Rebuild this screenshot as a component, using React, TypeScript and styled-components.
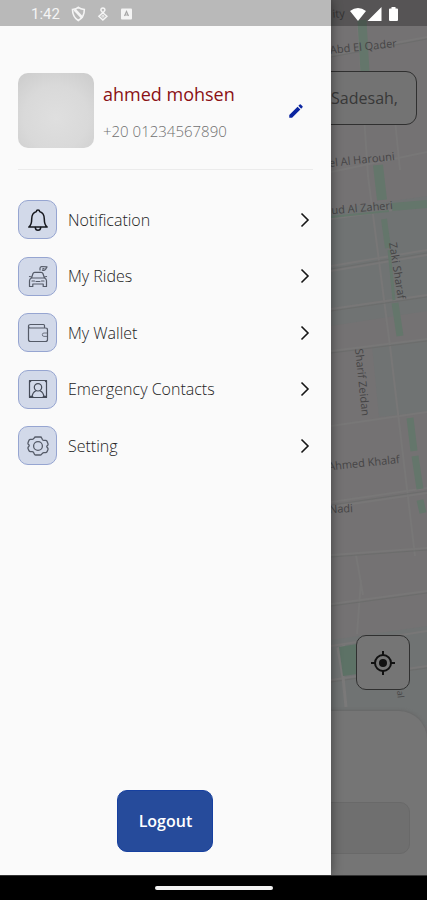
import React from "react";
import styled, { createGlobalStyle } from "styled-components";

const GlobalStyle = createGlobalStyle`
  *, *::before, *::after { box-sizing: border-box; }
  body {
    margin: 0;
    background: #000;
    font-family: "Open Sans", "Noto Sans", sans-serif;
  }
  button, input { font: inherit; }
`;

const Screen = styled.div`
  display: flex;
  flex-direction: column;
  min-height: 100vh;
`;

const Stage = styled.main`
  position: relative;
  flex: 1;
  display: grid;
  overflow: hidden;
`;

const Backdrop = styled.section`
  grid-area: 1 / 1;
  position: relative;
  display: flex;
  flex-direction: column;
  background: #747273;
`;

const MapDrawing = styled.svg`
  position: absolute;
  top: 0;
  right: 0;
  width: 100%;
  height: 100%;
`;

const SearchInput = styled.input`
  position: relative;
  margin: 71px 10px 0;
  height: 54px;
  padding: 0 18px;
  border: 1px solid #303030;
  border-radius: 11px;
  background: #737373;
  color: #383838;
  font-size: 16px;
  text-align: right;
`;

const LocateButton = styled.button`
  position: relative;
  display: grid;
  place-items: center;
  width: 54px;
  height: 55px;
  margin: auto 17px 21px auto;
  padding: 0;
  border: 1px solid #303030;
  border-radius: 10px;
  background: #757575;
`;

const Sheet = styled.div`
  position: relative;
  height: 164px;
  padding: 91px 17px 0;
  border-radius: 0 28px 0 0;
  background: #757575;
  box-shadow: 0 -1px 3px #666;
`;

const SheetInput = styled.input`
  width: 100%;
  height: 52px;
  border: 1px solid #696969;
  border-radius: 10px;
  background: #6f6f6f;
`;

const Drawer = styled.aside`
  grid-area: 1 / 1;
  position: relative;
  display: flex;
  flex-direction: column;
  width: 77.5%;
  padding: 73px 18px 23px;
  background: #fafafa;
  box-shadow: 1px 0 10px rgba(0, 0, 0, 0.4);
`;

const Profile = styled.header`
  display: flex;
  align-items: center;
  gap: 9px;
  padding-bottom: 21px;
  border-bottom: 1px solid #ebebeb;
`;

const Avatar = styled.div`
  flex: none;
  width: 76px;
  height: 75px;
  border-radius: 10px;
  background: radial-gradient(circle at 50% 60%, #dfdfdf, #d9d9d9 55%, #cbcbcb);
`;

const Identity = styled.div`
  flex: 1;
  display: flex;
  flex-direction: column;
  gap: 13px;
  padding-top: 3px;
  white-space: nowrap;
`;

const Name = styled.h1`
  margin: 0;
  color: #8a1014;
  font-size: 18px;
  font-weight: 400;
  line-height: 24px;
`;

const Phone = styled.span`
  color: #707070;
  font-size: 15px;
  font-weight: 300;
  line-height: 24px;
`;

const EditButton = styled.button`
  display: grid;
  place-items: center;
  width: 18px;
  height: 18px;
  margin-right: 8px;
  padding: 0;
  border: 0;
  background: none;
`;

const Menu = styled.nav`
  display: flex;
  flex-direction: column;
  justify-content: space-between;
  height: 265px;
  margin-top: 30px;
`;

const MenuLink = styled.a`
  display: flex;
  align-items: center;
  height: 39px;
  padding-right: 3px;
  color: #222;
  font-size: 16px;
  font-weight: 300;
  line-height: 24px;
  text-decoration: none;
`;

const Tile = styled.span`
  display: grid;
  place-items: center;
  width: 39px;
  height: 39px;
  margin-right: 11px;
  border: 1px solid #96a5d1;
  border-radius: 10px;
  background: #d2d9e9;
`;

const Label = styled.span`
  flex: 1;
`;

const LogoutButton = styled.button`
  align-self: center;
  width: 96px;
  height: 62px;
  margin-top: auto;
  padding: 0;
  border: 1px solid #1640a0;
  border-radius: 10px;
  background: #264b9b;
  color: #fff;
  font-size: 16px;
  font-weight: 600;
`;

const StatusBar = styled.div`
  position: absolute;
  top: 0;
  left: 0;
  right: 0;
  display: flex;
  align-items: center;
  gap: 11px;
  height: 26px;
  padding: 2px 28px 0 31px;
  background: rgba(0, 0, 0, 0.26);
  color: #f4f4f4;
`;

const Clock = styled.span`
  font-family: Roboto, sans-serif;
  font-size: 15px;
  line-height: 20px;
`;

const Signals = styled.span`
  display: flex;
  margin-left: auto;
`;

const NavBar = styled.footer`
  display: grid;
  place-items: center;
  height: 25px;
  background: #000;
  border-top: 1px solid #333;
`;

const HomePill = styled.div`
  width: 118px;
  height: 4px;
  border-radius: 2px;
  background: #f2f2f2;
`;

const Icon = ({ size = 24, width = 1, color = "#555b68", children }: { size?: number; width?: number; color?: string; children: React.ReactNode }) => (
  <svg width={size} height={size} viewBox="0 0 24 24" fill="none" stroke={color} strokeWidth={width} strokeLinecap="round" strokeLinejoin="round" aria-hidden="true">
    {children}
  </svg>
);

const BellIcon = () => (
  <Icon width={1.5} color="#16181e">
    <path d="M2.800 19h18.400c-2.400-1.700-2.900-3.700-2.900-8 0-4.300-2-6.600-4.600-7.400-.2-2-3.200-2-3.400 0C7.700 4.400 5.700 6.700 5.700 11c0 4.300-.5 6.300-2.900 8Z" />
    <path d="M9.300 19.500c.2 3.800 5.200 3.800 5.400 0" />
  </Icon>
);

const CarIcon = () => (
  <Icon width={1.200}>
    <path d="M5.500 14 7 9.500q.4-1.200 1.700-1.200h6.500q1.300 0 1.700 1.200L18.500 14M5.500 14q-2 .8-2 2.800V22.500h3.300v-2.500h10.400v2.500h3.300v-5.700q0-2-2-2.800ZM3.500 12.500l2 .5M20.500 12.500l-1.900.5M6 17h2.500M15.500 17h2.500M10 17.500h4" />
    <path d="M14 6V4.300q0-1.500 1.600-1.800l5.400.4-1.500 2.500q-1.200 1.500-3.100.8M16.800 4.800l1.200-.3" />
  </Icon>
);

const WalletIcon = () => (
  <Icon width={1.200}>
    <path d="M18.500 6V4.500q0-1-1-1H4.500Q2.500 3.500 2.500 5v13.500q0 2 2 2h15q2 0 2-2V9q0-2-2-2h-15Q2.500 7 2.500 5.200" />
    <path d="M21.500 12H18a1.700 1.700 0 0 0 0 3.400h3.500" strokeWidth="0.800" />
  </Icon>
);

const ContactIcon = () => (
  <Icon width={1.2} color="#444a57">
    <rect x="3.500" y="3.500" width="17" height="17" />
    <circle cx="12" cy="10.300" r="3.700" />
    <path d="M6 20.500c.2-3.400 1.300-5.600 4-6.700M18 20.500c-.2-3.400-1.300-5.600-4-6.700" />
    <path strokeWidth="2" d="M4.200 4.200h.1M19.800 4.200h.1M4.400 19.700h2M17.600 19.700h2" />
  </Icon>
);

const GearIcon = () => (
  <Icon width={1.3}>
    <path d="M9.600 3h4.800q1 0 1.300 1l.7 1.500q.5 1 1.600.9l1.600-.1q.9 0 1.300.8l1 2.400q.4 1 0 1.500l-.9 1q-.5.6 0 1.200l.9 1q.4.700 0 1.500l-1 2.200q-.4.800-1.300.8l-1.600-.1q-1.100-.1-1.600.9L15.700 20q-.3 1-1.300 1H9.600q-1 0-1.300-1l-.7-1.500q-.5-1-1.600-.9l-1.600.1q-.9 0-1.300-.8l-1-2.200q-.4-.8 0-1.500l.9-1q.5-.6 0-1.200l-.9-1q-.4-.5 0-1.500l1-2.400q.4-.8 1.300-.8l1.600.1q1.100.1 1.600-.9L8.300 4q.3-1 1.300-1Z" />
    <circle cx="12" cy="12" r="4.400" />
  </Icon>
);

const Chevron = () => (
  <svg width="10" height="16" viewBox="0 0 10 16" fill="none" stroke="#161616" strokeWidth="1.600" aria-hidden="true">
    <path d="M1.500 1.500 8 8l-6.500 6.500" />
  </svg>
);

const menu = [
  { label: "Notification", Glyph: BellIcon },
  { label: "My Rides", Glyph: CarIcon },
  { label: "My Wallet", Glyph: WalletIcon },
  { label: "Emergency Contacts", Glyph: ContactIcon },
  { label: "Setting", Glyph: GearIcon },
];

const CityMap = () => (
  <MapDrawing viewBox="0 0 427 875" preserveAspectRatio="xMaxYMin slice" aria-hidden="true">
    <path d="M331 210l96-14v115l-96 15ZM372 346l55-8v74l-48 5ZM331 640l96-14v100h-96Z" fill="#707373" />
    <g fill="none" stroke="#787777" strokeWidth="2">
      <path d="M331 55l96-18M331 172l96-20M331 219l96-14M331 266l96-16M331 271l96-16M331 309l96-14M331 351l96-12M331 426l96-14M331 502l96-14M331 507l96-14M331 555l96-7M331 604l96-13M331 646l96-15M331 680l96-14" />
      <path d="M358 26l10 150 22 170 25 210M394 110l6 60M361 580l-4 54M356 555l7 40" />
    </g>
    <g fill="none" stroke="#6c6d6c" strokeWidth="1">
      <path d="M331 57l96-18M331 269l96-16M331 311l96-14M331 353l96-12M331 505l96-14M331 557l96-7M331 606l96-13M331 682l96-14" />
    </g>
    <path d="M345 646l-7 3 5 28 3 30" fill="none" stroke="#7a7979" strokeWidth="3" />
    <g fill="none" stroke="#64766b">
      <path d="M362 20l3 52" strokeWidth="9" />
      <path d="M378 165l4 35" strokeWidth="10" />
      <path d="M331 217l58-6" strokeWidth="2" />
      <path d="M392 207l35-3" strokeWidth="8" />
      <path d="M384 219l4 29" strokeWidth="6" />
      <path d="M389 250l5 50" strokeWidth="3" />
      <path d="M395 303l5 33" strokeWidth="7" />
      <path d="M410 418l4 33M415 456l5 33M420 500l3 13" strokeWidth="7" />
    </g>
    <path d="M339 647l18-3v30l-14 2Z" fill="#5d7266" />
    <g fill="#464546" fontSize="11" fontFamily="Open Sans, sans-serif">
      <text transform="translate(345 17) rotate(-4)" textAnchor="end">ity</text>
      <text transform="translate(397 47) rotate(-6)" textAnchor="end">Abd El Qader</text>
      <text transform="translate(395 160) rotate(-6)" textAnchor="end">el Al Harouni</text>
      <text transform="translate(393 209) rotate(-5)" textAnchor="end">ud Al Zaheri</text>
      <text transform="translate(389 243) rotate(81)">Zaki Sharaf</text>
      <text transform="translate(355 349) rotate(84)">Sharif Zeidan</text>
      <text transform="translate(400 463) rotate(-6)" textAnchor="end">Ahmed Khalaf</text>
      <text transform="translate(353 512) rotate(-3)" textAnchor="end">Nadi</text>
      <text transform="translate(397 691) rotate(84)" fontSize="9">al</text>
    </g>
  </MapDrawing>
);

export default function App() {
  return (
    <Screen>
      <GlobalStyle />
      <Stage>
        <Backdrop>
          <CityMap />
          <SearchInput aria-label="Location" defaultValue="Sadesah," />
          <LocateButton aria-label="My location">
            <svg width="24" height="24" viewBox="0 0 24 24" fill="none" stroke="#111" strokeWidth="2" aria-hidden="true">
              <circle cx="12" cy="12" r="8" />
              <circle cx="12" cy="12" r="4" fill="#111" stroke="none" />
              <path d="M12 0v4M12 20v4M0 12h4M20 12h4" />
            </svg>
          </LocateButton>
          <Sheet>
            <SheetInput aria-label="Destination" />
          </Sheet>
        </Backdrop>
        <Drawer>
          <Profile>
            <Avatar />
            <Identity>
              <Name>ahmed mohsen</Name>
              <Phone>+20 01234567890</Phone>
            </Identity>
            <EditButton aria-label="Edit profile">
              <svg width="18" height="18" viewBox="0 0 24 24" fill="#0b25a0" aria-hidden="true">
                <path d="M3 17.250V21h3.750L17.810 9.940l-3.750-3.750ZM20.710 7.040a1 1 0 0 0 0-1.410l-2.340-2.340a1 1 0 0 0-1.410 0l-1.830 1.830 3.750 3.750Z" />
              </svg>
            </EditButton>
          </Profile>
          <Menu>
            {menu.map(({ label, Glyph }) => (
              <MenuLink href="#" key={label}>
                <Tile>
                  <Glyph />
                </Tile>
                <Label>{label}</Label>
                <Chevron />
              </MenuLink>
            ))}
          </Menu>
          <LogoutButton>Logout</LogoutButton>
        </Drawer>
        <StatusBar>
          <Clock>1:42</Clock>
          <svg width="62" height="16" viewBox="0 0 62 16" fill="none" stroke="#f4f4f4" aria-hidden="true">
            <path d="M1.500 3.500Q5.500 3 7.300 1.300 9.500 3 13.300 3.500 13.500 11 7.300 14.500 1.500 11 1.500 3.500Z" strokeWidth="1.600" />
            <path d="M3.500 3.500 11.500 12" strokeWidth="2.600" />
            <path d="M30 4.500a2 2 0 1 1 3.800 0L32 7Zm1.900 2.300 4 3.400-4 3.800-4-3.800Z" strokeWidth="1.500" />
            <circle cx="31.900" cy="10.200" r="1" strokeWidth="1" />
            <rect x="50" y="2.500" width="11" height="11" rx="1" fill="#f4f4f4" stroke="none" />
            <path d="M53.500 10 55.500 5.500l2 4.500M54.200 9h2.600" stroke="#a8a8a8" strokeWidth="1.200" />
          </svg>
          <Signals>
            <svg width="49" height="16" viewBox="0 0 49 16" fill="#fff" aria-hidden="true">
              <path d="M0 5Q8 -1 16 5L8 15ZM31.500 1v14h-14ZM41.500 1h4v1.500H47q1 0 1 1V14q0 1-1 1h-7q-1 0-1-1V3.500q0-1 1-1h1.500Z" />
            </svg>
          </Signals>
        </StatusBar>
      </Stage>
      <NavBar>
        <HomePill />
      </NavBar>
    </Screen>
  );
}
